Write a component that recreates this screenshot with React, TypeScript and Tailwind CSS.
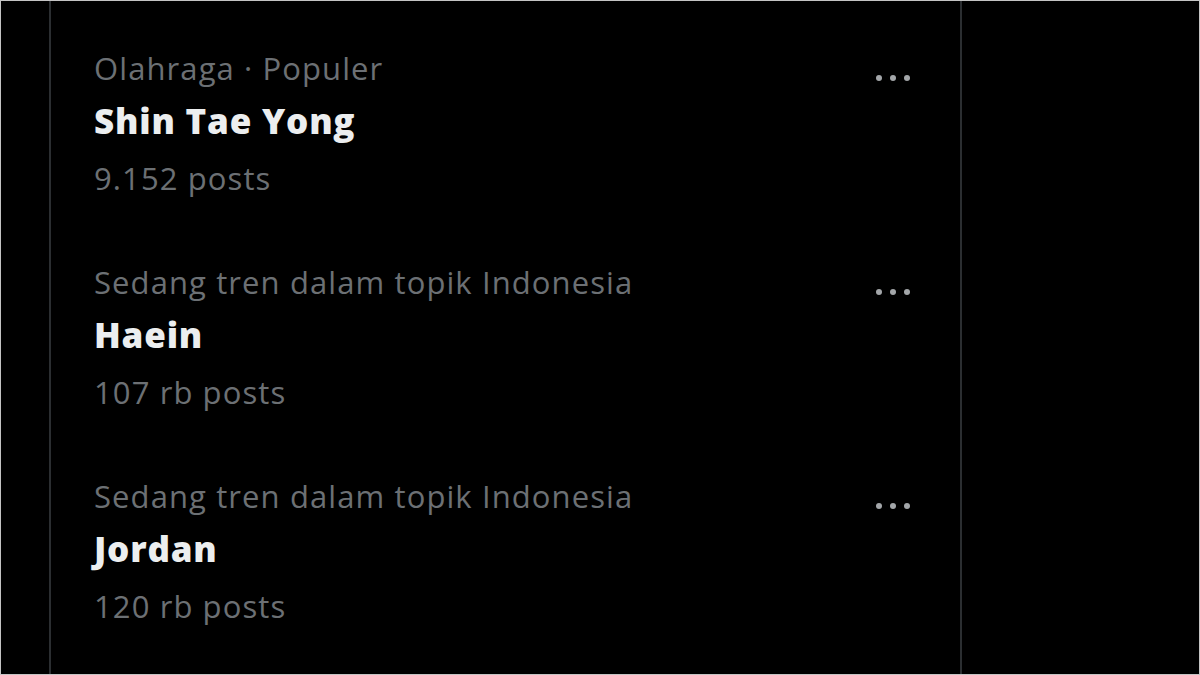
const TRENDS = [
  { category: "Olahraga · Populer", title: "Shin Tae Yong", count: "9.152 posts" },
  { category: "Sedang tren dalam topik Indonesia", title: "Haein", count: "107 rb posts" },
  { category: "Sedang tren dalam topik Indonesia", title: "Jordan", count: "120 rb posts" },
];

function MoreDots() {
  return (
    <div className="mt-[24px] flex h-[12px] items-center gap-[8px]" aria-label="More">
      <span className="h-[6px] w-[6px] rounded-full bg-[#a3a6a9]" />
      <span className="h-[6px] w-[6px] rounded-full bg-[#a3a6a9]" />
      <span className="h-[6px] w-[6px] rounded-full bg-[#a3a6a9]" />
    </div>
  );
}

export default function App() {
  return (
    <div
      className="flex h-[675px] w-[1200px] overflow-hidden border border-[#c4c4c4] bg-black"
      style={{ fontFamily: '"Open Sans", "Noto Sans", sans-serif' }}
    >
      <div className="w-[48px] shrink-0" />
      <main className="flex w-[913px] shrink-0 flex-col gap-[64px] border-x-2 border-[#2b2e31] pl-[43px] pr-[50px] pt-[47px]">
        {TRENDS.map((t, i) => (
          <section key={i} className="flex items-start justify-between">
            <div className="flex flex-col">
              <p className="text-[31px] leading-[40px] tracking-[1.1px] text-[#6c7074]">{t.category}</p>
              <h2 className="mt-[10px] text-[35px] font-extrabold leading-[46px] tracking-[0.8px] text-[#eceeef]">
                {t.title}
              </h2>
              <p className="mt-[14px] text-[31px] leading-[40px] tracking-[1.1px] text-[#6c7074]">{t.count}</p>
            </div>
            <MoreDots />
          </section>
        ))}
      </main>
      <div className="flex-1" />
    </div>
  );
}
